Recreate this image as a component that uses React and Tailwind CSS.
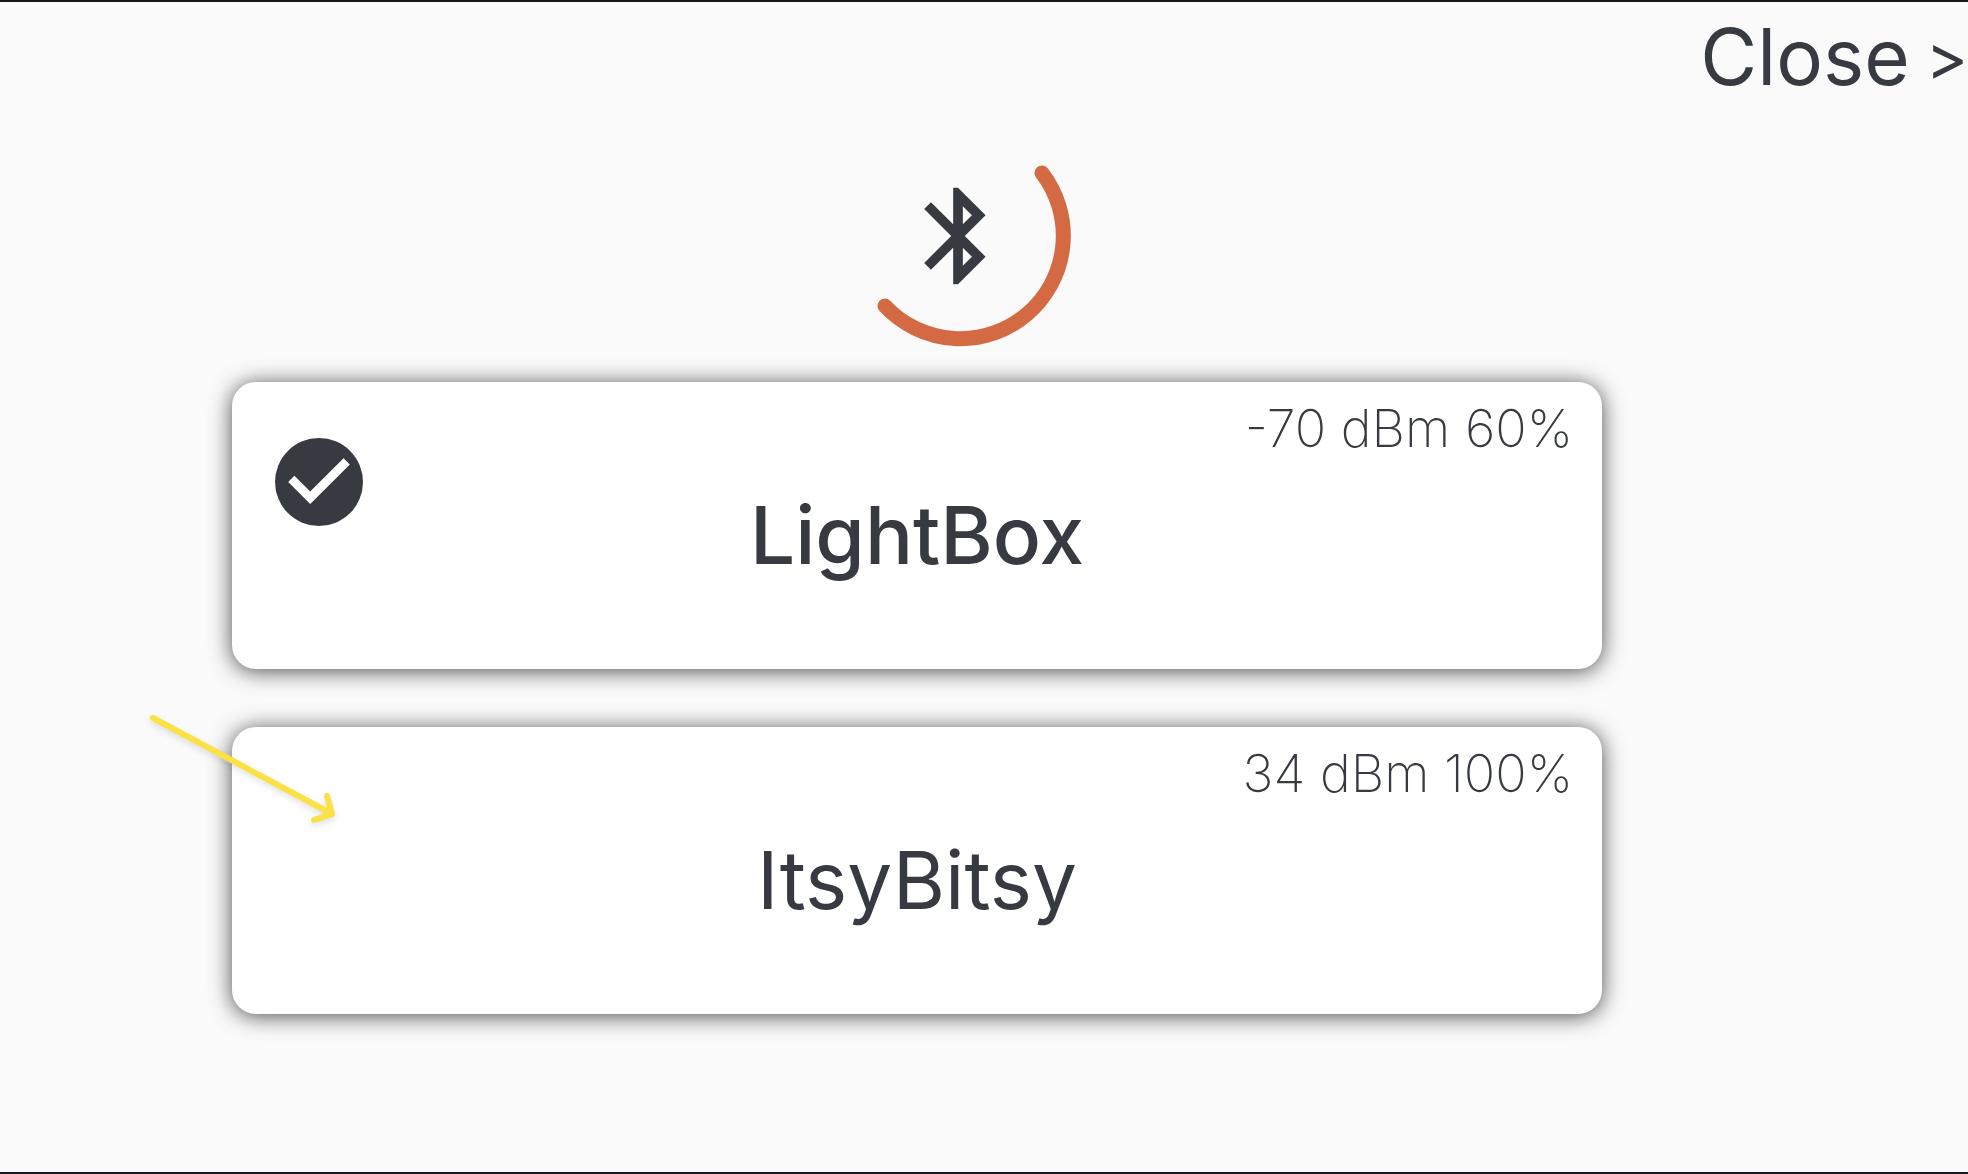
import React from 'react';

const devices = [
  { name: 'LightBox', signal: '-70 dBm 60%', selected: true, weight: 'font-medium' },
  { name: 'ItsyBitsy', signal: '34 dBm 100%', selected: false, weight: 'font-normal' },
];

const ScanIndicator = () => (
  <svg className="w-[224px] h-[224px]" viewBox="0 0 224 224" fill="none" role="img" aria-label="Scanning for devices">
    {/* Spinner arc */}
    <path
      d="M194 49 A103 103 0 0 1 37 182"
      stroke="#d46a43"
      strokeWidth="15"
      strokeLinecap="round"
    />
    {/* Bluetooth rune */}
    <svg x="52" y="54" width="116" height="116" viewBox="0 0 24 24">
      <path
        fill="#373b41"
        d="M17.71 7.71 12 2h-1v7.59L6.41 5 5 6.41 10.59 12 5 17.59 6.41 19 11 14.41V22h1l5.71-5.71L13.41 12l4.3-4.29zM13 5.83l1.88 1.88L13 9.59V5.83zm1.88 10.46L13 18.17v-3.76l1.88 1.88z"
      />
    </svg>
  </svg>
);

const CheckBadge = () => (
  <svg className="w-[88px] h-[88px]" viewBox="2 2 20 20" aria-hidden="true">
    <circle cx="12" cy="12" r="10" fill="#373b41" />
    <path fill="#fff" d="M10 17l-5-5 1.41-1.41L10 14.17l7.59-7.59L19 8l-9 9z" />
  </svg>
);

const PointerArrow = () => (
  <svg
    className="absolute -left-[92px] -top-[24px] w-[208px] h-[128px] pointer-events-none drop-shadow-md"
    viewBox="0 0 208 128"
    fill="none"
    stroke="#fae146"
    strokeWidth="6"
    strokeLinecap="round"
    strokeLinejoin="round"
    aria-hidden="true"
  >
    <path d="M13 15 L192 111 M187 93 L192 111 L174 117" />
  </svg>
);

const DeviceCard = ({ device, children }) => (
  <li className="relative">
    <button
      type="button"
      aria-pressed={device.selected}
      className="grid grid-cols-[88px_1fr_88px] w-full h-[287px] px-[43px] rounded-3xl bg-white shadow-[0_2px_22px_rgba(0,0,0,0.7)]"
    >
      <span className="pt-14">{device.selected && <CheckBadge />}</span>
      <span className="flex flex-col">
        <span className="-mr-[102px] pt-4 text-right text-[52px] leading-[62px] font-extralight">{device.signal}</span>
        <span className={`pt-6 text-center text-[80px] leading-[102px] ${device.weight}`}>{device.name}</span>
      </span>
    </button>
    {children}
  </li>
);

export default function App() {
  return (
    <div className="min-h-screen bg-[#fafafa] border-y-2 border-[#18181b] font-['Inter','Open_Sans',sans-serif] text-[#373b41]">
      <header className="flex justify-end">
        <button type="button" className="flex items-center gap-4 pt-2 text-[78px] leading-[94px]">
          <span>Close</span>
          <span className="text-[64px]">&gt;</span>
        </button>
      </header>
      <main className="pl-[232px] pr-[366px] pb-16">
        <div className="flex justify-center pl-[86px] pt-5">
          <ScanIndicator />
        </div>
        <ul className="flex flex-col gap-[58px] pt-[34px]">
          {devices.map((device) => (
            <DeviceCard key={device.name} device={device}>
              {!device.selected && <PointerArrow />}
            </DeviceCard>
          ))}
        </ul>
      </main>
    </div>
  );
}
